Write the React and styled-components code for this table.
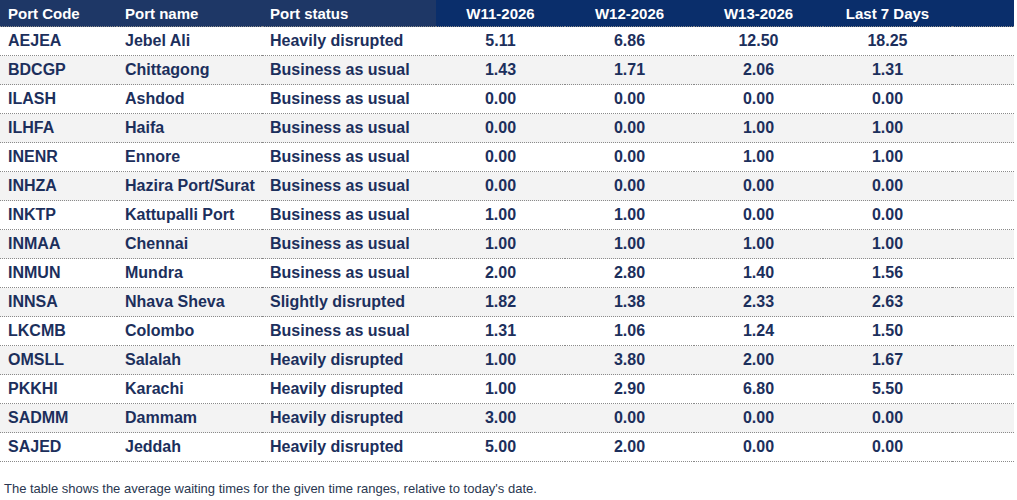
import React from "react";
import styled, { createGlobalStyle } from "styled-components";

const GlobalStyle = createGlobalStyle`
  body {
    margin: 0;
    background: #fff;
    font-family: "Liberation Sans", Arial, sans-serif;
  }
`;

const Wrapper = styled.div`
  width: 1014px;
`;

const Table = styled.table`
  width: 1014px;
  border-collapse: collapse;
  table-layout: fixed;
`;

const HeadCell = styled.th`
  height: 26px;
  padding: 0 8px;
  background-color: ${(p) => (p.$dark ? "#0a2e6b" : "#1e3766")};
  color: #fff;
  font-size: 15px;
  font-weight: 700;
  text-align: ${(p) => (p.$center ? "center" : "left")};
  white-space: nowrap;
  border-bottom: 1px dotted #8a8a8a;
`;

const Row = styled.tr`
  background-color: ${(p) => (p.$alt ? "#f3f3f3" : "#fff")};
`;

const Cell = styled.td`
  height: 28px;
  padding: 0 8px;
  color: #1c2f5c;
  font-size: 16px;
  font-weight: 700;
  text-align: ${(p) => (p.$center ? "center" : "left")};
  white-space: nowrap;
  border-bottom: 1px dotted #8a8a8a;
`;

const Note = styled.p`
  margin: 19px 0 0 4px;
  font-size: 13px;
  color: #2a3750;
`;

const rows = [
  ["AEJEA", "Jebel Ali", "Heavily disrupted", "5.11", "6.86", "12.50", "18.25"],
  ["BDCGP", "Chittagong", "Business as usual", "1.43", "1.71", "2.06", "1.31"],
  ["ILASH", "Ashdod", "Business as usual", "0.00", "0.00", "0.00", "0.00"],
  ["ILHFA", "Haifa", "Business as usual", "0.00", "0.00", "1.00", "1.00"],
  ["INENR", "Ennore", "Business as usual", "0.00", "0.00", "1.00", "1.00"],
  ["INHZA", "Hazira Port/Surat", "Business as usual", "0.00", "0.00", "0.00", "0.00"],
  ["INKTP", "Kattupalli Port", "Business as usual", "1.00", "1.00", "0.00", "0.00"],
  ["INMAA", "Chennai", "Business as usual", "1.00", "1.00", "1.00", "1.00"],
  ["INMUN", "Mundra", "Business as usual", "2.00", "2.80", "1.40", "1.56"],
  ["INNSA", "Nhava Sheva", "Slightly disrupted", "1.82", "1.38", "2.33", "2.63"],
  ["LKCMB", "Colombo", "Business as usual", "1.31", "1.06", "1.24", "1.50"],
  ["OMSLL", "Salalah", "Heavily disrupted", "1.00", "3.80", "2.00", "1.67"],
  ["PKKHI", "Karachi", "Heavily disrupted", "1.00", "2.90", "6.80", "5.50"],
  ["SADMM", "Dammam", "Heavily disrupted", "3.00", "0.00", "0.00", "0.00"],
  ["SAJED", "Jeddah", "Heavily disrupted", "5.00", "2.00", "0.00", "0.00"],
];

const weeks = ["W11-2026", "W12-2026", "W13-2026", "Last 7 Days"];

export default function App() {
  return (
    <Wrapper>
      <GlobalStyle />
      <Table>
        <colgroup>
          <col style={{ width: 117 }} />
          <col style={{ width: 145 }} />
          <col style={{ width: 174 }} />
          <col style={{ width: 129 }} />
          <col style={{ width: 129 }} />
          <col style={{ width: 129 }} />
          <col style={{ width: 129 }} />
          <col />
        </colgroup>
        <thead>
          <tr>
            <HeadCell>Port Code</HeadCell>
            <HeadCell>Port name</HeadCell>
            <HeadCell>Port status</HeadCell>
            {weeks.map((w) => (
              <HeadCell key={w} $dark $center>
                {w}
              </HeadCell>
            ))}
            <HeadCell $dark />
          </tr>
        </thead>
        <tbody>
          {rows.map((r, i) => (
            <Row key={r[0]} $alt={i % 2 === 1}>
              <Cell>{r[0]}</Cell>
              <Cell>{r[1]}</Cell>
              <Cell>{r[2]}</Cell>
              <Cell $center>{r[3]}</Cell>
              <Cell $center>{r[4]}</Cell>
              <Cell $center>{r[5]}</Cell>
              <Cell $center>{r[6]}</Cell>
              <Cell />
            </Row>
          ))}
        </tbody>
      </Table>
      <Note>
        The table shows the average waiting times for the given time ranges,
        relative to today's date.
      </Note>
    </Wrapper>
  );
}
